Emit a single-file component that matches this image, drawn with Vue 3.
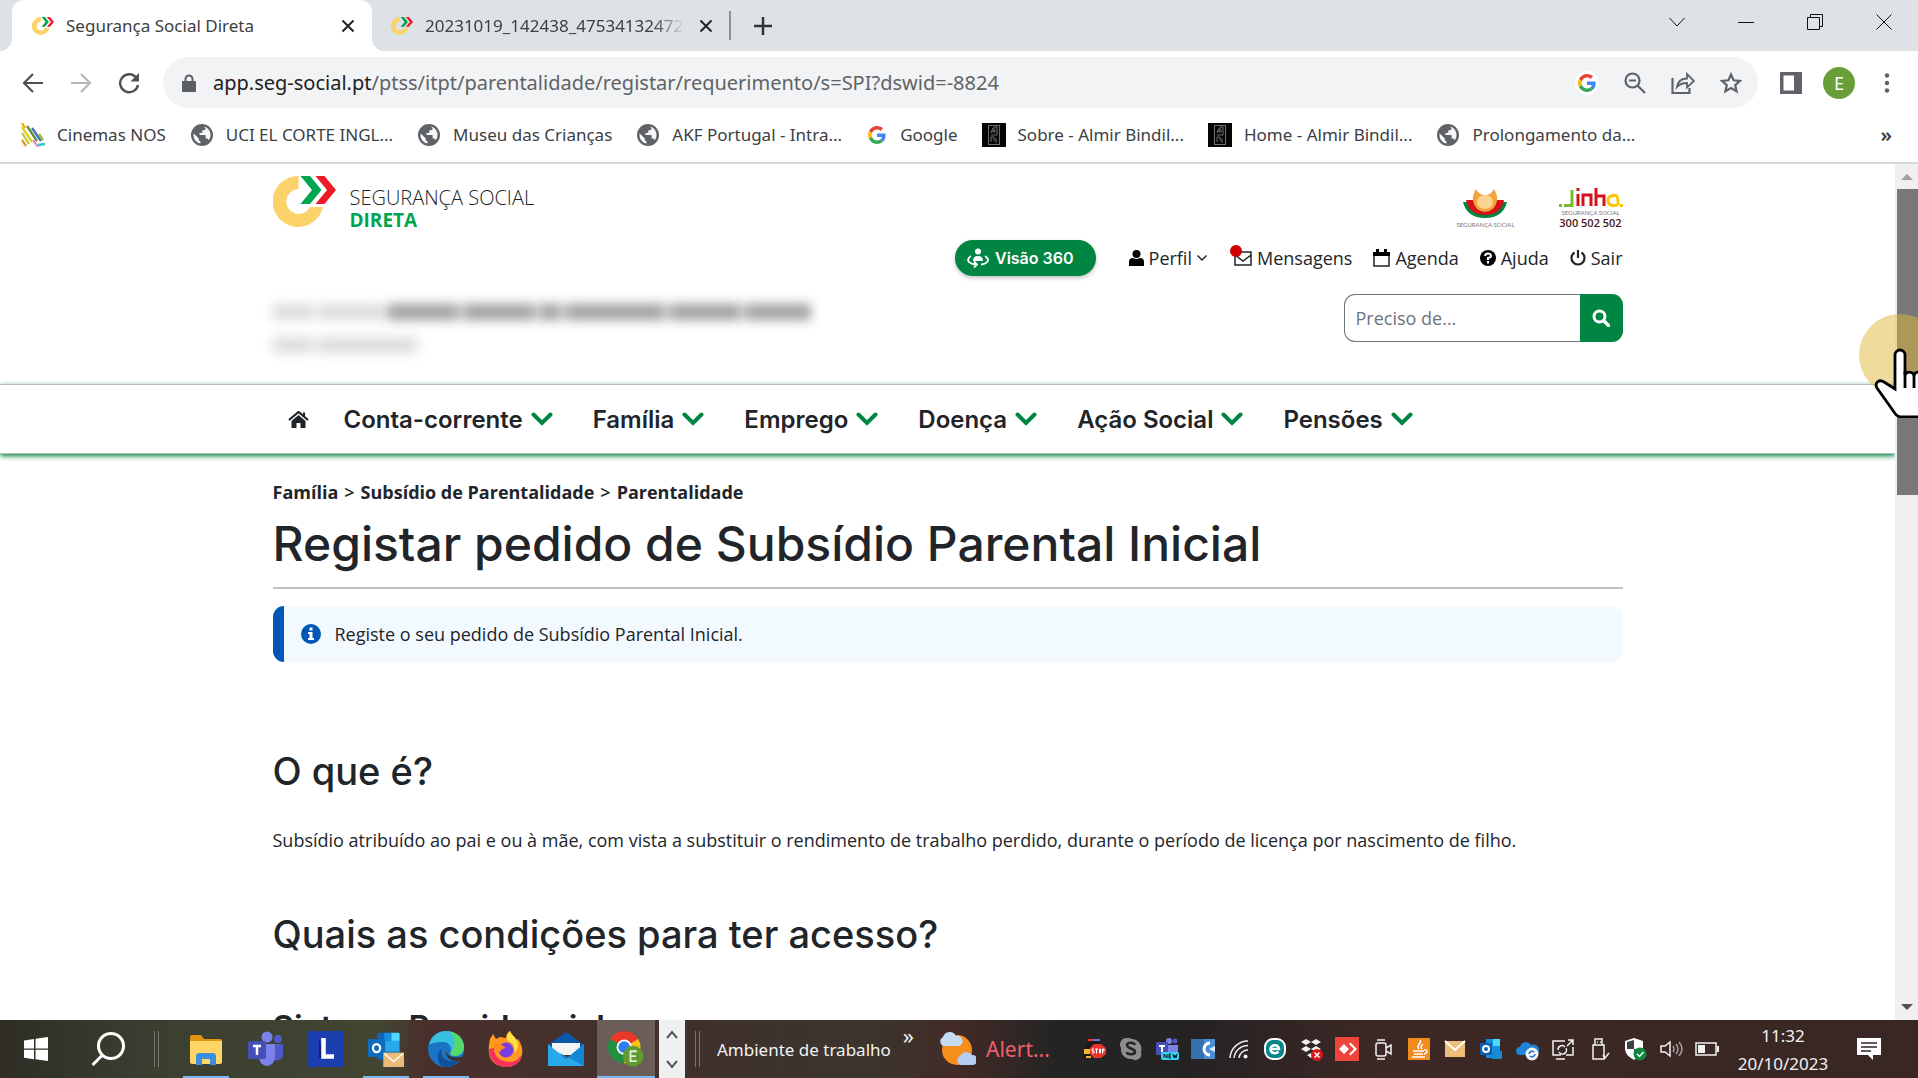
<script setup>
import { ref } from 'vue'

const need = ref('')

const bookmarks = [
    { icon: 'nos', label: 'Cinemas NOS' },
    { icon: 'globe', label: 'UCI EL CORTE INGL...' },
    { icon: 'globe', label: 'Museu das Crianças' },
    { icon: 'globe', label: 'AKF Portugal - Intra...' },
    { icon: 'google', label: 'Google' },
    { icon: 'almir', label: 'Sobre - Almir Bindil...' },
    { icon: 'almir', label: 'Home - Almir Bindil...' },
    { icon: 'globe', label: 'Prolongamento da...' }
]

const menu = ['Conta-corrente', 'Família', 'Emprego', 'Doença', 'Ação Social', 'Pensões']

const apps = [
    { icon: 'explorer', label: 'Explorador de Ficheiros', open: true },
    { icon: 'teams', label: 'Teams' },
    { icon: 'lapp', label: 'L' },
    { icon: 'outlook', label: 'Outlook', open: true },
    { icon: 'edge', label: 'Edge', open: true },
    { icon: 'firefox', label: 'Firefox' },
    { icon: 'mail', label: 'Correio' },
    { icon: 'chrome', label: 'Chrome', open: true, active: true }
]

const tray = ['police', 'skype', 'teamsnew', 'bluec', 'signal', 'eset', 'dropbox', 'anydesk', 'camera', 'java',
    'envelope', 'outlooksmall', 'onedrive', 'screen', 'usb', 'shield', 'speaker', 'battery']
</script>

<template>
    <svg class="sprite" aria-hidden="true">
        <symbol id="direta" viewBox="0 0 63 51">
            <path d="M25.500 0A25.500 25.500 0 1 0 50 31H37A12.500 12.500 0 1 1 25.500 13Z" fill="#fcd36a" />
            <path d="M27.500 0H37L48.500 14 37 28H27.500L39 14Z" fill="#00a54f" />
            <path d="M42.500 0H51.500L63 14 51.500 28H42.500L54 14Z" fill="#ed1c24" />
        </symbol>
        <symbol id="cross" viewBox="0 0 14 14">
            <path d="M1.500 1.500L12.500 12.500M12.500 1.500L1.500 12.500" stroke="currentColor" stroke-width="2" />
        </symbol>
        <symbol id="nos" viewBox="0 0 24 24">
            <g fill="none" stroke-width="2.300">
                <path d="M1 0L4 5" stroke="#f2a900" />
                <path d="M1 4L11 19" stroke="#d8cf22" />
                <path d="M6 3L16 18" stroke="#5b8f3a" />
                <path d="M1 10L8 21" stroke="#b9c832" />
                <path d="M11 5L20 18" stroke="#4a68c0" />
                <path d="M1 17L5 23" stroke="#df9a2d" />
                <path d="M12 17L17 24" stroke="#f38ac0" />
                <path d="M18 11L22 17" stroke="#8bc53f" />
                <path d="M17 22L24 21" stroke="#2cc4c9" />
            </g>
        </symbol>
        <symbol id="globe" viewBox="0 0 24 24">
            <circle cx="12" cy="12" r="11" fill="#5f6368" />
            <path d="M14 3.500c4 1 6.500 4.500 6.500 8.500 0 2-.6 3.700-1.700 5.200-.4-1-1.200-1.600-2.300-1.600h-.8v-2.500c0-.6-.4-1-1-1H9.500v-2h1.800c.6 0 1-.4 1-1V7.200h1.600c1 0 1.700-.8 1.700-1.700z" fill="#fff" opacity=".95" />
            <path d="M3.700 10.500l5 5v1c0 1 .8 1.700 1.700 1.700v2.200C6.500 19.600 3.500 16.500 3.500 12z" fill="#fff" />
        </symbol>
        <symbol id="google" viewBox="0 0 48 48">
            <path fill="#ea4335" d="M24 9.500c3.540 0 6.710 1.220 9.210 3.600l6.850-6.850C35.900 2.380 30.470 0 24 0 14.620 0 6.510 5.380 2.560 13.220l7.980 6.190C12.430 13.720 17.740 9.500 24 9.500z" />
            <path fill="#4285f4" d="M46.980 24.550c0-1.570-.15-3.090-.38-4.550H24v9.020h12.940c-.58 2.960-2.260 5.480-4.780 7.180l7.730 6c4.510-4.180 7.090-10.360 7.090-17.650z" />
            <path fill="#fbbc05" d="M10.530 28.590c-.48-1.450-.76-2.990-.76-4.590s.27-3.140.76-4.590l-7.980-6.190C.92 16.460 0 20.120 0 24c0 3.880.92 7.540 2.560 10.780l7.970-6.190z" />
            <path fill="#34a853" d="M24 48c6.480 0 11.930-2.130 15.890-5.810l-7.730-6c-2.150 1.450-4.920 2.300-8.160 2.300-6.260 0-11.570-4.220-13.470-9.910l-7.980 6.190C6.510 42.620 14.620 48 24 48z" />
        </symbol>
        <symbol id="almir" viewBox="0 0 24 24">
            <rect width="24" height="24" fill="#050505" />
            <g fill="none" stroke="#6f6f6f">
                <rect x="6.500" y="2.500" width="11" height="19" />
                <path d="M9 19V14h3v4M14 20v-5M9 12h6M15 12V4M12 10V4h3M9 10l2-5M9 8h5" />
            </g>
        </symbol>
        <symbol id="check" viewBox="0 0 22 14">
            <path d="M2.500 2.500L11 11 19.500 2.500" fill="none" stroke="#008542" stroke-width="4" stroke-linecap="round" />
        </symbol>
        <symbol id="explorer" viewBox="0 0 36 36">
            <path d="M2 6q0-2 2-2h9l3 4h16q2 0 2 2v22H2z" fill="#e09410" />
            <path d="M2 10h32v20q0 3-2 3H4q-2 0-2-3z" fill="#ffd566" />
            <path d="M8 34V25q0-3 3-3h14q3 0 3 3v9h-6v-6h-8v6z" fill="#3a8fe0" />
        </symbol>
        <symbol id="teams" viewBox="0 0 36 36">
            <circle cx="19" cy="6" r="5.500" fill="#7b83eb" />
            <circle cx="30" cy="8" r="4" fill="#5059c9" />
            <path d="M25 13h10v11a6 6 0 0 1-10 4z" fill="#5059c9" />
            <path d="M11 13h16v13a8 9 0 0 1-16 0z" fill="#7b83eb" />
            <rect y="10" width="18" height="18" rx="2" fill="#464eb8" />
            <path d="M5 15h8M9 15v9" stroke="#fff" stroke-width="2.500" />
        </symbol>
        <symbol id="lapp" viewBox="0 0 36 36">
            <rect width="36" height="36" fill="#1b3fae" />
            <path d="M11 8v19h5z" fill="#0d2363" />
            <path d="M15.500 7v18.500H26" fill="none" stroke="#fff" stroke-width="4.500" />
        </symbol>
        <symbol id="outlook" viewBox="0 0 40 40">
            <rect x="10" y="2" width="25" height="30" rx="2" fill="#1066b5" />
            <path d="M18 2h8v9h-8z" fill="#1490df" />
            <path d="M26 2h9v9h-9z" fill="#50d9ff" />
            <path d="M18 11h17v12H18z" fill="#28a8ea" />
            <rect y="9" width="19" height="20" rx="2" fill="#0f6cbd" />
            <ellipse cx="9.500" cy="19" rx="4" ry="4.500" fill="none" stroke="#fff" stroke-width="2.500" />
            <rect x="17" y="24" width="23" height="16" fill="#ecbb78" />
            <path d="M18 25l10.500 9L39 25" fill="none" stroke="#fff" stroke-width="1.500" />
        </symbol>
        <symbol id="edge" viewBox="0 0 36 36">
            <circle cx="18" cy="18" r="18" fill="#1b74c5" />
            <path d="M1 14C3 5 10 0 18 0c10 0 18 7 18 16 0 6-4 9-9 9-5 0-5-3-4-5 1-3-1-9-8-9C9 11 3 12 1 14z" fill="#35c1df" />
            <path d="M22 .500C30 2 36 8 36 16c0 6-4 9-9 9-5 0-5-3-4-5 5-3 5-12-1-19.500z" fill="#56d96b" />
            <path d="M14 18c-3 8 5 16 18 10-3 5-8 8-14 8C9 36 7 22 14 18z" fill="#12509b" />
            <path d="M19 18c-2 5 3 10 14 8l3 2-2 1c-10 4-19-4-15-11z" fill="#3f302d" />
        </symbol>
        <symbol id="firefox" viewBox="0 0 36 36">
            <path d="M2 8l3-5 3 5 4-2 6 1c0-4 2-6 4-7 1 4 5 5 6 9l2-1c4 6 5 11 4 16C33 31 26 36 18 36S2 31 1 22c-.6-5 0-9 1-14z" fill="#ff9a1f" />
            <path d="M1 18c0 11 8 18 17 18s15-5 16-13c-3 5-7 8-12 8C14 31 6 27 6 17z" fill="#f5325b" />
            <path d="M22 0c1 4 5 5 7 10s0 10-2 12c0-7-2-10-7-12-2-2-1-7 2-10z" fill="#ffe14a" />
            <circle cx="18" cy="19" r="7.500" fill="#7a3ce0" />
            <path d="M5 13l9 1 4 3c-5 0-5 4-7 4-3 0-5-4-6-8z" fill="#ff8a16" />
        </symbol>
        <symbol id="mail" viewBox="0 0 36 36">
            <path d="M0 14L18 1l18 13v4H0z" fill="#0b57a8" />
            <path d="M4 12h28v12H4z" fill="#f4f4f4" />
            <path d="M0 13l18 15L36 13v22H0z" fill="#29a9ea" />
            <path d="M36 13v22L10 21l8 7z" fill="#1387d5" />
        </symbol>
        <symbol id="chrome" viewBox="0 0 40 40">
            <path d="M18 18L2.400 9A18 18 0 0 1 33.600 9z" fill="#ea3829" />
            <path d="M18 18L33.600 9A18 18 0 0 1 18 36z" fill="#fbc116" />
            <path d="M18 18v18A18 18 0 0 1 2.400 9z" fill="#22903f" />
            <circle cx="18" cy="18" r="8.500" fill="#fff" />
            <circle cx="18" cy="18" r="6.500" fill="#2d7ff0" />
            <circle cx="28" cy="28" r="11.500" fill="#5f9b31" />
            <path d="M32 22.500h-7v11h7M25 28h6" fill="none" stroke="#e4efd9" stroke-width="2" />
        </symbol>
        <symbol id="weather" viewBox="0 0 38 34">
            <circle cx="19" cy="18" r="15" fill="#f58e1c" />
            <path d="M5 14a5 5 0 0 1 0-9 7 7 0 0 1 13-1 5 5 0 0 1 3 10z" fill="#c5dbf7" />
            <path d="M22 33a5 5 0 0 1 0-9 7 7 0 0 1 12-1 5 5 0 0 1 1 10z" fill="#b3cdf0" />
        </symbol>

        <symbol id="police" viewBox="0 0 24 24">
            <path d="M5 2h6v2H5z" fill="#e33" />
            <path d="M11 2h6v2h-6z" fill="#5a7de0" />
            <path d="M5 5h12l3 6v10H1V11z" fill="#1a1a1a" />
            <path d="M1 12h6v5H1zM3 19h5v2H3z" fill="#f2b632" />
            <path d="M11 7h7l5 4v6l-5 4h-7l-4-4v-6z" fill="#e8352b" />
            <path d="M11 12H9v2h2v2H9M12 12h3M13.500 12v4.500M16.500 12v4h1v-4zM19.500 16.500V12h1.500v2h-1.500" fill="none" stroke="#fff" />
        </symbol>
        <symbol id="skype" viewBox="0 0 24 24">
            <path d="M8 1a7 7 0 0 1 5 1 10 10 0 0 1 9 13 6 6 0 0 1-9 7A10 10 0 0 1 2 11a6.500 6.500 0 0 1 6-10z" fill="#8d8d8d" />
            <path d="M16 8c-1-3-8-3-8 0 0 4 8 3 8 7 0 3-8 3-8 0" fill="none" stroke="#2a2523" stroke-width="2.500" />
        </symbol>
        <symbol id="teamsnew" viewBox="0 0 24 24">
            <circle cx="14" cy="4" r="3" fill="#7b83eb" />
            <circle cx="20" cy="4" r="2.500" fill="#5059c9" />
            <path d="M9 8h14v9H9z" fill="#7b83eb" />
            <path d="M1 5h12v13H1z" fill="#464eb8" />
            <path d="M4 9h6M7 9v6" stroke="#fff" stroke-width="2" />
            <rect x="6" y="15" width="18" height="8" rx="2" fill="#35d5f5" />
            <path d="M9 21v-4l3 4v-4M16 17h-2v4h2M14 19h2M18 17l1 4 1-3 1 3 1-4" fill="none" stroke="#111" />
        </symbol>
        <symbol id="bluec" viewBox="0 0 24 24">
            <path d="M0 2h24v20H0z" fill="#4b8fd2" />
            <path d="M0 2h13v20H0z" fill="#3672ae" />
            <path d="M19 6a6 6 0 1 0 0 12" fill="none" stroke="#fff" stroke-width="3" />
            <path d="M24 9l-6 3 6 3z" fill="#dcebfa" />
        </symbol>
        <symbol id="signal" viewBox="0 0 24 24">
            <path d="M3 21A18 18 0 0 1 21 4M7 21A14 14 0 0 1 21 8.500M12 21a9 9 0 0 1 9-8" fill="none" stroke="#eee" stroke-width="1.500" />
            <circle cx="18.500" cy="19.500" r="2" fill="#fff" />
        </symbol>
        <symbol id="eset" viewBox="0 0 24 24">
            <rect x="1" y="1" width="22" height="22" rx="9" fill="#fff" />
            <rect x="3" y="3" width="18" height="18" rx="7" fill="#06868b" />
            <path d="M7.500 12H16c0-5-8.500-5-8.500 0 0 5 6 5 8 2.500" fill="none" stroke="#fff" stroke-width="2.500" />
        </symbol>
        <symbol id="dropbox" viewBox="0 0 24 24">
            <path d="M7 2l5 3-5 3-5-3zM17 2l5 3-5 3-5-3zM7 9l5 3-5 3-5-3zM17 9l5 3-5 3-5-3zM12 16l4 2-4 3-4-3z" fill="#f2f2f2" />
            <circle cx="18" cy="18" r="6" fill="#d8151c" />
            <path d="M15.500 15.500l5 5M20.500 15.500l-5 5" stroke="#fff" stroke-width="1.500" />
        </symbol>
        <symbol id="anydesk" viewBox="0 0 24 24">
            <path d="M0 0h24v24H0z" fill="#ef443b" />
            <path d="M9 7l5 5-5 5-5-5zM14 7l1.500-1.500L22 12l-6.500 6.500L14 17l5-5z" fill="#fff" />
        </symbol>
        <symbol id="camera" viewBox="0 0 24 24">
            <g fill="none" stroke="#f2f2f2" stroke-width="1.500">
                <rect x="5" y="6" width="10" height="13" rx="2" />
                <path d="M15 11l5-3v9l-5-3M6 3h8M6 22h8" />
            </g>
        </symbol>
        <symbol id="java" viewBox="0 0 24 24">
            <path d="M1 1h22v22H1z" fill="#f08b1d" />
            <path d="M13 3c3 3-5 5-1 9M16 7c-2 2-3 3-1 5M6 14h11M7 17h9M5 20h13M17 13c4-1 4 3 0 4" fill="none" stroke="#fff" stroke-width="1.500" />
        </symbol>
        <symbol id="envelope" viewBox="0 0 24 24">
            <path d="M2 4h20v16H2z" fill="#edbd79" />
            <path d="M2 4l10 9 10-9" fill="none" stroke="#fff" stroke-width="2" />
        </symbol>
        <symbol id="outlooksmall" viewBox="0 0 24 24">
            <path d="M7 2h14v19H7z" fill="#1490df" />
            <path d="M14 2h7v7h-7z" fill="#50d9ff" />
            <path d="M1 6h12v12H1z" fill="#0f5fb0" />
            <circle cx="7" cy="12" r="3" fill="none" stroke="#fff" stroke-width="2" />
            <path d="M13 14h10v8H13z" fill="#1b8ad6" />
        </symbol>
        <symbol id="onedrive" viewBox="0 0 24 24">
            <path d="M5 18a4 4 0 0 1 0-8 6 6 0 0 1 11-2 5 5 0 0 1 5 10z" fill="#1d83d9" />
            <circle cx="17" cy="17" r="6.500" fill="#f2f2f2" />
            <path d="M14 17a3 3 0 0 1 5-2M20 17a3 3 0 0 1-5 2" fill="none" stroke="#1d6fc4" stroke-width="1.500" />
        </symbol>
        <symbol id="screen" viewBox="0 0 24 24">
            <g fill="none" stroke="#f2f2f2" stroke-width="1.500">
                <path d="M14 4H2v14h8M5 22h9M22 10v8h-7" />
                <path d="M7 13a4 4 0 0 1 7-3M15 11a4 4 0 0 1-7 4M17 3h5v5M22 3l-6 6" />
            </g>
        </symbol>
        <symbol id="usb" viewBox="0 0 24 24">
            <path d="M8 2h7v6H8zM6 8h11v14H6zM10 5h1M13 5h1" fill="none" stroke="#f2f2f2" stroke-width="1.500" />
            <path d="M16 18l2 3 4-5" fill="none" stroke="#f2f2f2" stroke-width="1.500" />
        </symbol>
        <symbol id="shield" viewBox="0 0 24 24">
            <path d="M11 1l9 3v7c0 6-4 9-9 12C6 20 2 17 2 11V4z" fill="#fff" />
            <path d="M11 3v9H4V5zM11 12h7c-1 4-4 6-7 8z" fill="#3c4244" />
            <circle cx="17" cy="17" r="6.500" fill="#10893e" />
            <path d="M14 17l2.500 2.500L20.500 15" fill="none" stroke="#fff" stroke-width="1.500" />
        </symbol>
        <symbol id="speaker" viewBox="0 0 24 24">
            <path d="M2 9h4l5-4v14l-5-4H2z" fill="none" stroke="#f2f2f2" stroke-width="1.500" />
            <path d="M14 9q2 3 0 6M17 7q4 5 0 10M20 5q6 7 0 14" fill="none" stroke="#a5a09d" stroke-width="1.500" />
        </symbol>
        <symbol id="battery" viewBox="0 0 24 24">
            <path d="M1 6h20v12H1z" fill="none" stroke="#f2f2f2" stroke-width="1.500" />
            <path d="M3 8h7v8H3z" fill="#f2f2f2" />
            <path d="M22 9h2v6h-2z" fill="#f2f2f2" />
        </symbol>
    </svg>

    <div class="desktop">
        <header class="browser">
            <div class="tabs">
                <div class="tab active">
                    <svg class="favicon"><use href="#direta" /></svg>
                    <span class="tab-title">Segurança Social Direta</span>
                    <button class="tab-close" aria-label="Fechar separador"><svg width="14" height="14"><use href="#cross" /></svg></button>
                </div>
                <div class="tab">
                    <svg class="favicon"><use href="#direta" /></svg>
                    <span class="tab-title faded">20231019_142438_47534132472</span>
                    <button class="tab-close" aria-label="Fechar separador"><svg width="14" height="14"><use href="#cross" /></svg></button>
                </div>
                <button class="new-tab" aria-label="Novo separador">
                    <svg width="18" height="18" viewBox="0 0 18 18"><path d="M9 0v18M0 9h18" stroke="#303236" stroke-width="2.500" /></svg>
                </button>
                <div class="window-buttons">
                    <button aria-label="Pesquisar separadores"><svg width="16" height="16" viewBox="0 0 16 16"><path d="M.500 4L8 12 15.500 4" /></svg></button>
                    <button aria-label="Minimizar"><svg width="16" height="16" viewBox="0 0 16 16"><path d="M0 8.500h16" /></svg></button>
                    <button aria-label="Restaurar"><svg width="16" height="16" viewBox="0 0 16 16"><path d="M.500 3.500h12v12H.500zM3.500 3V.500h12v12H13" /></svg></button>
                    <button aria-label="Fechar"><svg width="16" height="16" viewBox="0 0 16 16"><path d="M.500.500l15 15M15.500.500l-15 15" /></svg></button>
                </div>
            </div>

            <div class="toolbar">
                <div class="history">
                    <button aria-label="Anterior"><svg width="22" height="20" viewBox="0 0 22 20"><path d="M21 10H2M11 1L2 10l9 9" fill="none" stroke="#4d5156" stroke-width="2.200" /></svg></button>
                    <button aria-label="Seguinte"><svg width="22" height="20" viewBox="0 0 22 20"><path d="M1 10h19M11 1l9 9-9 9" fill="none" stroke="#b4b6b9" stroke-width="2.200" /></svg></button>
                    <button aria-label="Recarregar">
                        <svg width="22" height="22" viewBox="0 0 22 22">
                            <path d="M18.500 6A9 9 0 1 0 20 13" fill="none" stroke="#4d5156" stroke-width="2.400" />
                            <path d="M21 1v8.500h-8.500z" fill="#4d5156" />
                        </svg>
                    </button>
                </div>
                <div class="address">
                    <svg width="14" height="18" viewBox="0 0 14 18">
                        <path d="M1 7h12q1 0 1 1v9q0 1-1 1H1q-1 0-1-1V8q0-1 1-1z" fill="#5a5d63" />
                        <path d="M3.500 8V5a3.500 3.500 0 0 1 7 0v3" fill="none" stroke="#5a5d63" stroke-width="2" />
                    </svg>
                    <p class="url"><b>app.seg-social.pt</b>/ptss/itpt/parentalidade/registar/requerimento/s=SPI?dswid=-8824</p>
                    <div class="address-tools">
                        <button class="g" aria-label="Google"><svg width="18" height="18"><use href="#google" /></svg></button>
                        <button aria-label="Reduzir">
                            <svg width="22" height="22" viewBox="0 0 22 22"><circle cx="8.500" cy="8.500" r="7" /><path d="M13.500 13.500L21 21M5 8.500h7" /></svg>
                        </button>
                        <button aria-label="Partilhar">
                            <svg width="24" height="22" viewBox="0 0 24 22"><path d="M1.500 6v15h17v-5" /><path d="M6 15C7 9 11 6.500 16 6.500V2l7 7-7 6.500V11C11 11 8.500 12 6 15z" stroke-width="1.800" /></svg>
                        </button>
                        <button aria-label="Adicionar aos marcadores">
                            <svg width="22" height="22" viewBox="0 0 22 22"><path d="M11 2.500l2.600 5.800 6.400.6-4.800 4.200 1.400 6.200L11 16l-5.600 3.300 1.400-6.200L2 8.900l6.400-.6z" /></svg>
                        </button>
                    </div>
                </div>
                <div class="profile">
                    <button aria-label="Painel lateral">
                        <svg width="22" height="22" viewBox="0 0 22 22"><path d="M0 0h22v22H0z" fill="#5f6368" /><path d="M3.500 3.500H14v15H3.500z" fill="#fff" /></svg>
                    </button>
                    <button class="avatar" aria-label="Conta">E</button>
                    <button aria-label="Menu">
                        <svg width="6" height="20" viewBox="0 0 6 20" fill="#5f6368"><circle cx="3" cy="2.500" r="2.200" /><circle cx="3" cy="10" r="2.200" /><circle cx="3" cy="17.500" r="2.200" /></svg>
                    </button>
                </div>
            </div>

            <nav class="bookmarks" aria-label="Marcadores">
                <a v-for="(item, i) of bookmarks" :key="i" href="#">
                    <svg :class="{ small: item.icon === 'google' }"><use :href="`#${item.icon}`" /></svg>{{ item.label }}
                </a>
                <button class="more" aria-label="Mais marcadores">»</button>
            </nav>
        </header>

        <div class="viewport">
            <main class="page">
                <div class="container top">
                    <div class="brand">
                        <svg class="brand-mark"><use href="#direta" /></svg>
                        <p><span>SEGURANÇA SOCIAL</span><strong>DIRETA</strong></p>
                    </div>
                    <div class="logos">
                        <div class="logo-ss">
                            <svg width="44" height="30" viewBox="0 0 44 30">
                                <path d="M0 14h9q3 10 13 10t13-10h9Q40 30 22 30T0 14z" fill="#008542" />
                                <path d="M3 12h8q2 11 11 11t11-11h8Q38 27 22 27T3 12z" fill="#d4121a" />
                                <path d="M13 1q3 6 9 6t9-6q4 7 3 12-2 10-12 11Q12 23 10 13 9 8 13 1z" fill="#f6a13c" />
                                <ellipse cx="22" cy="14" rx="8" ry="7" fill="#fbd58d" />
                            </svg>
                            <span>SEGURANÇA SOCIAL</span>
                        </div>
                        <div class="logo-linha">
                            <svg width="64" height="20" viewBox="0 0 64 20" fill="none" stroke-width="3">
                                <path d="M0 17.500h3M5 17.500h8V2" stroke="#7ab929" />
                                <path d="M19 6v12M19 0v3M24 18V7h8v11M37 0v18M37 8h8v10" stroke="#d4121a" />
                                <path d="M58 17.500h-5q-4-1-4-5t5-5 5 5v5M61 17.500h3" stroke="#fdc500" />
                            </svg>
                            <span>SEGURANÇA SOCIAL</span>
                            <b>300 502 502</b>
                        </div>
                    </div>
                </div>

                <div class="container user-links">
                    <button class="visao">
                        <svg width="22" height="20" viewBox="0 0 22 20">
                            <circle cx="11" cy="3.500" r="3" fill="#fff" />
                            <path d="M6 13q0-5 5-5t5 5z" fill="#fff" />
                            <path d="M4 8C-2 12 2 16 9 16.500M18 8c6 4 2 8-4 8.500M7 13.500l3 3-3 3" fill="none" stroke="#fff" stroke-width="1.800" />
                        </svg>
                        Visão 360
                    </button>
                    <a href="#">
                        <svg width="15" height="16" viewBox="0 0 15 16"><circle cx="7.500" cy="4" r="4" /><path d="M0 16v-4q0-4 4-4 3.500 2 7 0 4 0 4 4v4z" /></svg>
                        Perfil
                        <svg width="10" height="8" viewBox="0 0 10 8"><path d="M.500 1.500L5 6l4.500-4.500" fill="none" stroke="#212529" stroke-width="1.500" /></svg>
                    </a>
                    <a href="#" class="messages">
                        <svg width="18" height="16" viewBox="0 0 18 16"><path d="M1 2h16v13H1zM1 5l8 6 8-6" fill="none" stroke="#212529" stroke-width="1.500" /></svg>
                        Mensagens
                    </a>
                    <a href="#">
                        <svg width="17" height="18" viewBox="0 0 17 18"><path d="M1 4h15v13H1z" fill="none" stroke="#212529" stroke-width="1.500" /><path d="M0 3h17v4H0zM3 0h3v5H3zM11 0h3v5h-3z" /></svg>
                        Agenda
                    </a>
                    <a href="#">
                        <svg width="16" height="16" viewBox="0 0 16 16"><circle cx="8" cy="8" r="8" /><path d="M5 6q.5-2.500 3-2.500t3 2.200Q11 7.500 8 8v2M8 11v2.500" fill="none" stroke="#fff" stroke-width="2" /></svg>
                        Ajuda
                    </a>
                    <a href="#">
                        <svg width="16" height="16" viewBox="0 0 16 16"><path d="M4.500 2.500a6.500 6.500 0 1 0 7 0M8 0v8" fill="none" stroke="#212529" stroke-width="2.200" /></svg>
                        Sair
                    </a>
                </div>

                <div class="container welcome">
                    <div class="hidden-info" aria-hidden="true">
                        <div class="line"><i class="w1" /><i class="w2" /><i class="w3 dark" /><i class="w3 dark" /><i class="w4 dark" /><i class="w5 dark" /><i class="w3 dark" /><i class="w2 dark" /></div>
                        <div class="line"><i class="w1" /><i class="w5" /></div>
                    </div>
                    <form class="search" @submit.prevent>
                        <input v-model="need" type="text" placeholder="Preciso de..." aria-label="Preciso de">
                        <button aria-label="Pesquisar">
                            <svg width="18" height="18" viewBox="0 0 18 18"><circle cx="7.500" cy="7.500" r="5.500" fill="none" stroke="#fff" stroke-width="3" /><path d="M11.500 11.500l5 5" stroke="#fff" stroke-width="3.500" stroke-linecap="round" /></svg>
                        </button>
                    </form>
                </div>

                <nav class="main-nav" aria-label="Principal">
                    <div class="container">
                        <a href="#" aria-label="Início">
                            <svg width="21" height="17" viewBox="0 0 21 17">
                                <path d="M1 9l9.500-8L20 9M16 1.500v4" fill="none" stroke="#212529" stroke-width="2.200" />
                                <path d="M3.500 10l7-6 7 6v7h-5v-5h-4v5h-5z" fill="#212529" />
                            </svg>
                        </a>
                        <div class="menu">
                            <a v-for="item of menu" :key="item" href="#">{{ item }}<svg width="22" height="14"><use href="#check" /></svg></a>
                        </div>
                    </div>
                </nav>

                <article class="container content">
                    <nav class="crumbs" aria-label="Navegação">
                        <a href="#">Família</a><span>&gt;</span><a href="#">Subsídio de Parentalidade</a><span>&gt;</span><a href="#">Parentalidade</a>
                    </nav>
                    <h1>Registar pedido de Subsídio Parental Inicial</h1>
                    <div class="info">
                        <svg width="20" height="20" viewBox="0 0 20 20"><circle cx="10" cy="10" r="10" fill="#0057b8" /><path d="M8.500 3.500h3v3h-3zM7 8h4.500v6H13v2H7v-2h1.500v-4H7z" fill="#fff" /></svg>
                        Registe o seu pedido de Subsídio Parental Inicial.
                    </div>
                    <h2>O que é?</h2>
                    <p>Subsídio atribuído ao pai e ou à mãe, com vista a substituir o rendimento de trabalho perdido, durante o período de licença por nascimento de filho.</p>
                    <h2>Quais as condições para ter acesso?</h2>
                    <h3>Sistema Previdencial</h3>
                </article>
            </main>

            <div class="scrollbar">
                <svg width="12" height="7" viewBox="0 0 12 7"><path d="M0 7l6-6 6 6z" fill="#a0a0a0" /></svg>
                <div class="thumb" />
                <svg width="12" height="7" viewBox="0 0 12 7"><path d="M0 0h12L6 6z" fill="#505050" /></svg>
            </div>

            <div class="pointer">
                <svg width="60" height="104" viewBox="0 0 60 104">
                    <circle cx="42" cy="41" r="41" fill="#dfb939" fill-opacity=".5" />
                    <path d="M37 75V41a5 5 0 0 1 10 0v20a5 5 0 0 1 9 0 5 5 0 0 1 9 0v42H43q-4 0-7-5L19 74c-3-6 3-9 7-6z" fill="#fff" stroke="#000" stroke-width="2.800" />
                    <path d="M47 57v17M56 60v14" stroke="#000" stroke-width="2.800" />
                </svg>
            </div>
        </div>

        <footer class="taskbar">
            <button class="start" aria-label="Iniciar">
                <svg width="24" height="24" viewBox="0 0 24 24" fill="#fff"><path d="M0 3.500l10-1.500v9.500H0zM11.500 1.800L24 0v11.500H11.500zM0 12.800h10v9.400L0 20.700zM11.500 12.800H24V24l-12.500-1.700z" /></svg>
            </button>
            <button class="start" aria-label="Procurar">
                <svg width="34" height="34" viewBox="0 0 34 34" fill="none" stroke="#fff" stroke-width="3"><circle cx="20" cy="14" r="12.500" /><path d="M11.500 23L1.500 33" /></svg>
            </button>
            <span class="grip" />
            <div class="apps">
                <button v-for="app of apps" :key="app.icon" :class="{ open: app.open, current: app.active }" :aria-label="app.label">
                    <svg><use :href="`#${app.icon}`" /></svg>
                </button>
            </div>
            <div class="stepper">
                <button aria-label="Acima"><svg width="12" height="10" viewBox="0 0 12 10"><path d="M1 8l5-6 5 6" /></svg></button>
                <button aria-label="Abaixo"><svg width="12" height="10" viewBox="0 0 12 10"><path d="M1 2l5 6 5-6" /></svg></button>
            </div>
            <span class="grip" />
            <span class="desk-label">Ambiente de trabalho</span>
            <button class="desk-more" aria-label="Mais">»</button>
            <button class="alert">
                <svg width="38" height="34"><use href="#weather" /></svg>
                Alert...
            </button>
            <div class="tray">
                <svg v-for="icon of tray" :key="icon" width="24" height="24"><use :href="`#${icon}`" /></svg>
            </div>
            <div class="clock"><span>11:32</span><span>20/10/2023</span></div>
            <button class="notifications" aria-label="Notificações">
                <svg width="24" height="24" viewBox="0 0 24 24"><path d="M0 1h24v17h-8v5l-5-5H0z" fill="#fff" /><path d="M4 6h16M4 10h16M4 14h10" stroke="#2b2625" stroke-width="1.500" /></svg>
            </button>
        </footer>
    </div>
</template>

<style>
body {
    margin: 0;
    overflow: hidden;
}
</style>

<style scoped>
.sprite {
    position: absolute;
    width: 0;
    height: 0;
}

.desktop {
    display: flex;
    flex-direction: column;
    height: 100vh;
    font-family: "Open Sans", "Noto Sans", sans-serif;
    color: #212529;
    background: #fff;
}

button {
    display: flex;
    align-items: center;
    justify-content: center;
    border: 0;
    padding: 0;
    background: none;
    font-family: inherit;
    color: inherit;
}

a {
    color: inherit;
    text-decoration: none;
}

p,
h1,
h2,
h3 {
    margin: 0;
}

svg {
    flex-shrink: 0;
}

/* browser */
.browser {
    border-bottom: 2px solid #d6d7d9;
    font-family: "Noto Sans", "Open Sans", sans-serif;
}

.tabs {
    display: flex;
    height: 51px;
    padding-left: 12px;
    background: #dee1e6;
}

.tab {
    position: relative;
    display: flex;
    align-items: center;
    box-sizing: border-box;
    width: 357px;
    padding: 0 14px 0 19px;
}

.tab.active {
    width: 360px;
    padding: 0 15px 0 20px;
    background: #fff;
    border-radius: 12px 12px 0 0;
}

.tab.active::before,
.tab.active::after {
    content: "";
    position: absolute;
    bottom: 0;
    width: 12px;
    height: 12px;
}

.tab.active::before {
    right: 100%;
    background: radial-gradient(circle at 0 0, transparent 12px, #fff 12px);
}

.tab.active::after {
    left: 100%;
    background: radial-gradient(circle at 100% 0, transparent 12px, #fff 12px);
}

.favicon {
    width: 22px;
    height: 20px;
}

.tab-title {
    flex: 1;
    margin: 0 12px;
    overflow: hidden;
    white-space: nowrap;
    font-size: 17px;
    color: #3c4043;
}

.faded {
    mask-image: linear-gradient(to right, #000 88%, transparent);
}

.tab-close {
    width: 18px;
    height: 24px;
}

.new-tab {
    width: 66px;
    margin: 11px 0;
    border-left: 2px solid #8d9095;
}

.window-buttons {
    display: flex;
    height: 44px;
    margin-left: auto;
}

.window-buttons button {
    width: 69px;
}

.window-buttons path {
    fill: none;
    stroke: #111;
}

.toolbar {
    display: flex;
    align-items: center;
    padding: 6px 0 6px 9px;
}

.history {
    display: flex;
    width: 154px;
}

.history button {
    width: 48px;
}

.address {
    display: flex;
    flex: 1;
    align-items: center;
    height: 51px;
    padding: 0 3px 0 19px;
    border-radius: 26px;
    background: #f1f3f4;
}

.url {
    flex: 1;
    margin-left: 17px;
    font-size: 20px;
    color: #5f6368;
}

.url b {
    font-weight: 400;
    color: #202124;
}

.address-tools {
    display: flex;
}

.address-tools button {
    width: 48px;
    height: 26px;
    fill: none;
    stroke: #5f6368;
    stroke-width: 2.200;
}

.address-tools .g {
    stroke: none;
    background: radial-gradient(circle, #fff 12px, transparent 12px);
}

.profile {
    display: flex;
    align-items: center;
    padding: 0 7px 0 9px;
}

.profile button {
    width: 48px;
}

.profile .avatar {
    width: 32px;
    height: 32px;
    margin: 0 8px;
    border-radius: 50%;
    background: #689f38;
    font-size: 18px;
    color: #fff;
}

.bookmarks {
    display: flex;
    align-items: center;
    gap: 24px;
    height: 41px;
    padding: 0 26px 7px 21px;
    font-size: 17px;
    color: #3c4043;
}

.bookmarks a {
    display: flex;
    align-items: center;
    gap: 12px;
    white-space: nowrap;
}

.bookmarks svg {
    width: 24px;
    height: 24px;
}

.bookmarks svg.small {
    width: 22px;
    height: 18px;
}

.more {
    margin-left: auto;
    font-size: 20px;
    font-weight: 600;
}

/* page */
.viewport {
    position: relative;
    display: flex;
    flex: 1;
    min-height: 0;
    overflow: hidden;
}

.page {
    flex: 1;
    overflow: hidden;
}

.container {
    box-sizing: border-box;
    width: calc(100% - 48px);
    max-width: 1350px;
    margin: 0 auto;
}

.top {
    display: flex;
    justify-content: space-between;
    height: 65px;
    padding-top: 12px;
}

.brand {
    display: flex;
    gap: 14px;
}

.brand-mark {
    width: 63px;
    height: 51px;
}

.brand p {
    display: flex;
    flex-direction: column;
    padding-top: 11px;
    font-size: 20px;
    line-height: 22px;
    font-weight: 300;
}

.brand strong {
    font-size: 19px;
    font-weight: 700;
    color: #00a54f;
}

.logos {
    display: flex;
    gap: 44px;
    padding-top: 12px;
    font-family: "Lato", sans-serif;
}

.logo-ss,
.logo-linha {
    display: flex;
    flex-direction: column;
    align-items: center;
    font-size: 6px;
    line-height: 9px;
    color: #777;
}

.logo-ss svg {
    margin-bottom: 2px;
}

.logo-linha b {
    font-family: "Open Sans", sans-serif;
    font-size: 11px;
    line-height: 12px;
    font-weight: 600;
    color: #4a1518;
}

.user-links {
    display: flex;
    align-items: center;
    justify-content: flex-end;
    gap: 21px;
    height: 36px;
    margin-top: 11px;
    font-size: 18px;
}

.user-links a {
    display: flex;
    align-items: center;
    gap: 5px;
}

.visao {
    gap: 6px;
    height: 36px;
    margin-right: 12px;
    padding: 0 22px 0 12px;
    border-radius: 18px;
    background: #008542;
    box-shadow: 0 2px 4px rgba(0, 0, 0, .25);
    font-family: "Inter", sans-serif;
    font-size: 16px;
    font-weight: 600;
    color: #fff;
}

.user-links .messages {
    position: relative;
    margin-left: 6px;
}

.messages::before {
    content: "";
    position: absolute;
    top: -1px;
    left: -4px;
    width: 12px;
    height: 12px;
    border-radius: 50%;
    background: #d00000;
}

.welcome {
    display: flex;
    justify-content: space-between;
    padding: 18px 0 31px;
}

.hidden-info {
    display: flex;
    flex-direction: column;
    gap: 17px;
    padding-top: 10px;
    filter: blur(6px);
}

.line {
    display: flex;
    gap: 4px;
}

.line i {
    height: 16px;
    background: #dcdcdc;
}

.line .dark {
    background: #9d9d9d;
}

.line .w1 {
    width: 40px;
}

.line .w2 {
    width: 66px;
}

.line .w3 {
    width: 72px;
}

.line .w4 {
    width: 22px;
}

.line .w5 {
    width: 100px;
}

.search {
    display: flex;
    width: 279px;
    height: 48px;
}

.search input {
    box-sizing: border-box;
    flex: 1;
    min-width: 0;
    padding: 0 11px;
    border: 1px solid #6c757d;
    border-right: 0;
    border-radius: 11px 0 0 11px;
    font-family: inherit;
    font-size: 18px;
    color: inherit;
}

.search input::placeholder {
    color: #6c757d;
}

.search button {
    width: 43px;
    border-radius: 0 11px 11px 0;
    background: #008542;
}

.main-nav {
    border-top: 1px solid #b8bcba;
    border-bottom: 1px solid #b8bcba;
    box-shadow: 0 2px 5px #008542;
    font-family: "Inter", sans-serif;
    font-size: 24px;
    font-weight: 600;
}

.main-nav .container {
    display: flex;
    align-items: center;
    gap: 35px;
    height: 68px;
    padding-left: 15px;
}

.menu {
    display: flex;
    gap: 40px;
}

.menu a {
    display: flex;
    align-items: center;
    gap: 8px;
    white-space: nowrap;
}

.crumbs {
    display: flex;
    gap: 6px;
    padding-top: 25px;
    font-size: 18px;
    line-height: 26px;
    font-weight: 700;
}

.crumbs span {
    font-weight: 600;
}

h1,
h2,
h3 {
    font-family: "Inter", sans-serif;
    font-weight: 500;
}

h1 {
    padding: 9px 0 13px;
    border-bottom: 2px solid #c0c0c0;
    font-size: 48px;
    line-height: 60px;
    white-space: nowrap;
}

.info {
    display: flex;
    align-items: center;
    gap: 14px;
    height: 56px;
    margin: 17px 0 85px;
    padding-left: 17px;
    border-left: 11px solid #0057b8;
    border-radius: 11px;
    background: #f2f9ff;
    font-size: 18px;
}

h2 {
    font-size: 38px;
    line-height: 48px;
}

.content p {
    margin: 32px 0 57px;
    font-size: 18px;
    line-height: 26px;
}

h3 {
    margin-top: 49px;
    font-size: 33px;
    line-height: 40px;
    font-weight: 600;
}

.scrollbar {
    display: flex;
    flex-direction: column;
    align-items: center;
    width: 23px;
    padding: 9px 0;
    background: #f0f0f0;
    box-sizing: border-box;
}

.thumb {
    align-self: flex-end;
    width: 21px;
    height: 306px;
    margin: 9px 0 auto;
    background: #787878;
}

.pointer {
    position: absolute;
    top: 150px;
    right: 0;
    line-height: 0;
}

/* taskbar */
.taskbar {
    display: flex;
    align-items: center;
    height: 58px;
    background: linear-gradient(90deg, #2f2d26 0, #3a3f30 8%, #434532 20%, #4a302c 22%, #40302d 36%, #3b352e 45%, #422a27 50%, #252424 55%, #252223 62%, #3d2825 72%, #382724 100%);
    font-family: "Noto Sans", sans-serif;
    font-size: 17px;
    color: #f2f2f2;
}

.start {
    width: 72px;
    height: 58px;
}

.grip {
    width: 3px;
    height: 36px;
    margin: 0 17px 0 10px;
    border: solid #77766f;
    border-width: 0 1px;
}

.apps {
    display: flex;
    align-self: stretch;
}

.apps button {
    width: 60px;
    border: solid transparent;
    border-width: 0 7px;
    background-clip: padding-box;
}

.apps .open {
    box-shadow: inset 0 -2px #76b9ed;
}

.apps .current {
    width: 58px;
    margin: 0 4px 0 1px;
    border-width: 0;
    background-color: #6b5d58;
}

.apps svg {
    width: 38px;
    height: 36px;
}

.stepper {
    display: flex;
    flex-direction: column;
    align-self: stretch;
    width: 26px;
    background: #f0f0f0;
}

.stepper button {
    flex: 1;
}

.stepper path {
    fill: none;
    stroke: #555;
    stroke-width: 2;
}

.desk-label {
    white-space: nowrap;
}

.desk-more {
    align-self: flex-start;
    margin-left: 12px;
    font-size: 22px;
}

.alert {
    gap: 10px;
    margin-left: 24px;
    font-size: 21px;
    color: #f0606c;
}

.tray {
    display: flex;
    gap: 12px;
    margin-left: auto;
}

.clock {
    display: flex;
    flex-direction: column;
    align-items: center;
    width: 128px;
    padding-top: 2px;
    line-height: 28px;
}

.notifications {
    width: 44px;
    margin-right: 27px;
}
</style>
